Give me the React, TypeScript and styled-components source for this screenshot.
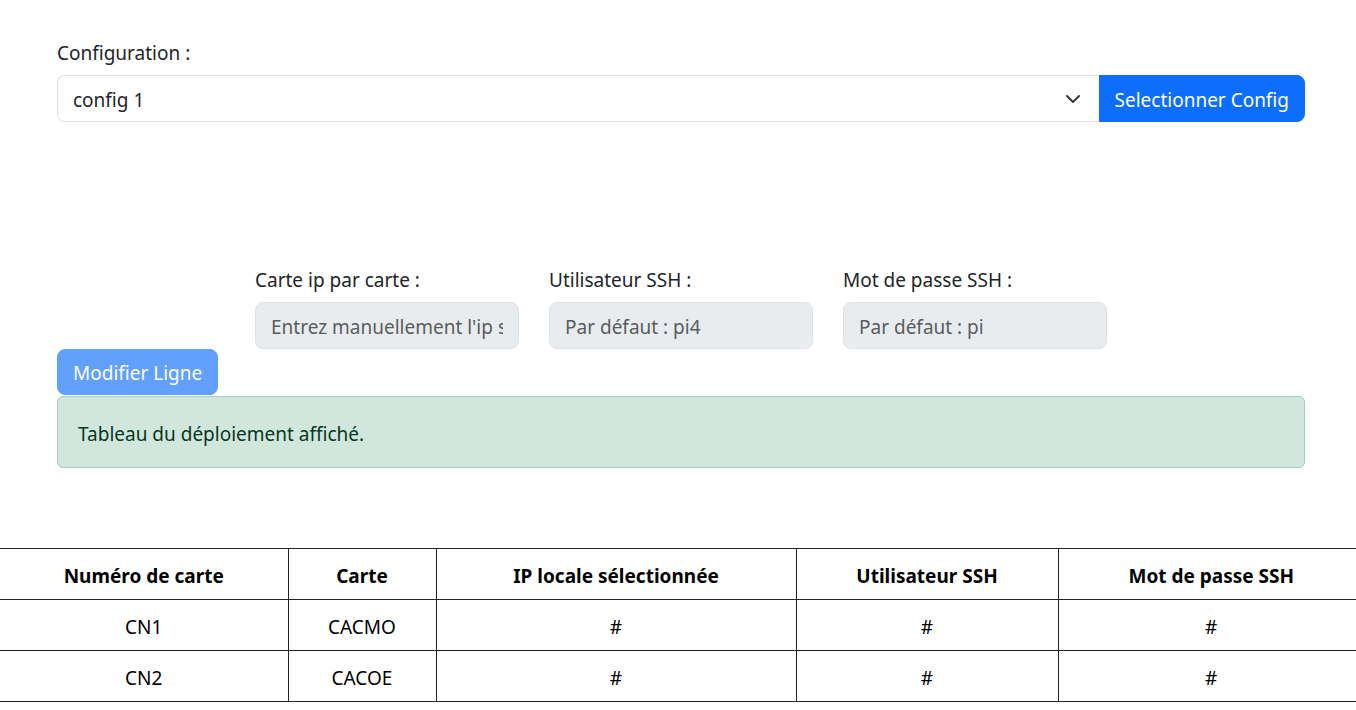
import React from "react";
import styled, { createGlobalStyle } from "styled-components";

const GlobalStyle = createGlobalStyle`
  body {
    margin: 0;
    background: #fff;
    color: #212529;
    font-family: "Noto Sans", "Open Sans", sans-serif;
    overflow-x: hidden;
  }
  * { box-sizing: border-box; }
`;

const rows = [
  { num: "CN1", carte: "CACMO", ip: "#", user: "#", pass: "#" },
  { num: "CN2", carte: "CACOE", ip: "#", user: "#", pass: "#" },
];

export default function App() {
  return (
    <>
      <GlobalStyle />
      <Container>
        <Label>Configuration :</Label>
        <InputGroup>
          <SelectWrap>
            <Select defaultValue="config 1">
              <option>config 1</option>
              <option>config 2</option>
            </Select>
            <Chevron width="16" height="16" viewBox="0 0 16 16">
              <path
                d="m2 5 6 6 6-6"
                fill="none"
                stroke="#343a40"
                strokeWidth="2"
                strokeLinecap="round"
                strokeLinejoin="round"
              />
            </Chevron>
          </SelectWrap>
          <Button grouped>Selectionner Config</Button>
        </InputGroup>

        <FieldsRow>
          <Field>
            <Label>Carte ip par carte :</Label>
            <Input disabled placeholder="Entrez manuellement l'ip souhaitée" />
          </Field>
          <Field>
            <Label>Utilisateur SSH :</Label>
            <Input disabled placeholder="Par défaut : pi4" />
          </Field>
          <Field>
            <Label>Mot de passe SSH :</Label>
            <Input disabled placeholder="Par défaut : pi" />
          </Field>
        </FieldsRow>

        <Button disabled>Modifier Ligne</Button>
        <Alert>Tableau du déploiement affiché.</Alert>
      </Container>

      <Table>
        <colgroup>
          <col style={{ width: 288 }} />
          <col style={{ width: 148 }} />
          <col style={{ width: 360 }} />
          <col style={{ width: 262 }} />
          <col style={{ width: 306 }} />
        </colgroup>
        <thead>
          <tr>
            <Th>Numéro de carte</Th>
            <Th>Carte</Th>
            <Th>IP locale sélectionnée</Th>
            <Th>Utilisateur SSH</Th>
            <Th>Mot de passe SSH</Th>
          </tr>
        </thead>
        <tbody>
          {rows.map(r => (
            <tr key={r.num}>
              <Td>{r.num}</Td>
              <Td>{r.carte}</Td>
              <Td>{r.ip}</Td>
              <Td>{r.user}</Td>
              <Td>{r.pass}</Td>
            </tr>
          ))}
        </tbody>
      </Table>
    </>
  );
}

const Container = styled.div`
  padding: 37px 51px 0 57px;
`;

const Label = styled.div`
  font-size: 19px;
  line-height: 30px;
  padding-top: 1px;
  margin-bottom: 7px;
`;

const InputGroup = styled.div`
  display: flex;
  height: 47px;
`;

const SelectWrap = styled.div`
  position: relative;
  flex: 1;
  display: flex;
`;

const Select = styled.select`
  flex: 1;
  appearance: none;
  -webkit-appearance: none;
  border: 1px solid #dee2e6;
  border-right: none;
  border-radius: 8px 0 0 8px;
  background: #fff;
  padding: 2px 48px 0 15px;
  font-family: inherit;
  font-size: 19px;
  color: #212529;
  outline: none;
`;

const Chevron = styled.svg`
  position: absolute;
  right: 18px;
  top: 16px;
  pointer-events: none;
`;

interface ButtonProps {
  grouped?: boolean;
}
const Button = styled.button<ButtonProps>`
  display: block;
  background: #0d6efd;
  color: #fff;
  border: 1px solid #0d6efd;
  border-radius: ${({ grouped }) => (grouped ? "0 8px 8px 0" : "8px")};
  height: ${({ grouped }) => (grouped ? "47px" : "46px")};
  padding: 2px 15px 0;
  font-family: inherit;
  font-size: 19px;
  cursor: pointer;
  &:disabled {
    opacity: 0.65;
    cursor: default;
  }
`;

const FieldsRow = styled.div`
  display: flex;
  justify-content: center;
  gap: 30px;
  margin-top: 142px;
`;

const Field = styled.div`
  width: 264px;
`;

const Input = styled.input`
  display: block;
  width: 100%;
  height: 47px;
  border: 1px solid #dee2e6;
  border-radius: 8px;
  background: #e9ecef;
  padding: 2px 15px 0;
  font-family: inherit;
  font-size: 19px;
  &::placeholder {
    color: #595c5f;
  }
`;

const Alert = styled.div`
  margin-top: 1px;
  background: #d1e7dd;
  border: 1px solid #a3cfbb;
  border-radius: 6px;
  color: #0a3622;
  font-size: 19px;
  line-height: 30px;
  padding: 22px 20px 18px;
`;

const Table = styled.table`
  margin-top: 80px;
  width: 1364px;
  border-collapse: collapse;
  table-layout: fixed;
  color: #000;
  font-size: 19px;
`;

const Th = styled.th`
  border: 1px solid #212529;
  border-left: none;
  padding: 12px 8px 8px;
  line-height: 30px;
  text-align: center;
  font-weight: 700;
  &:last-child { border-right: none; }
`;

const Td = styled.td`
  border: 1px solid #212529;
  border-left: none;
  padding: 12px 8px 8px;
  line-height: 30px;
  text-align: center;
  &:last-child { border-right: none; }
`;
